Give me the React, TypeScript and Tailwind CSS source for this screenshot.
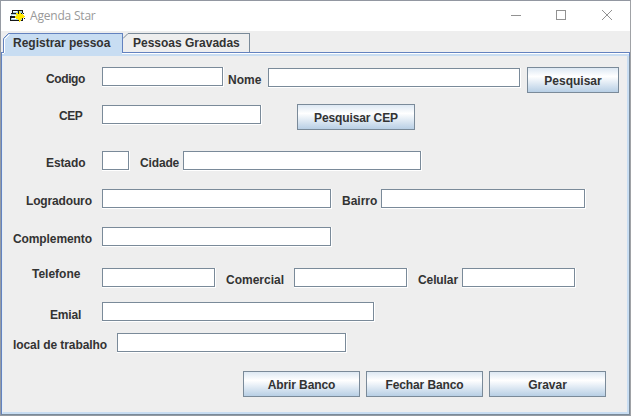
import type { ReactNode } from "react";

function Row({ className, children }: { className: string; children: ReactNode }) {
  return <div className={`flex shrink-0 items-start ${className}`}>{children}</div>;
}

function Label({ className, children }: { className: string; children: ReactNode }) {
  return <label className={`block shrink-0 whitespace-nowrap leading-4 ${className}`}>{children}</label>;
}

function Field({ className }: { className: string }) {
  return (
    <div className={`h-5 shrink-0 border-r border-b border-white ${className}`}>
      <input className="block h-[19px] w-full border border-[#7a8a99] bg-white px-1 outline-none" />
    </div>
  );
}

function Button({ className, children }: { className: string; children: ReactNode }) {
  return (
    <button
      className={`h-[26px] shrink-0 border border-[#7a8a99] bg-linear-to-b from-[#dde8f3] via-white via-35% to-[#b8cfe5] pt-px text-center leading-4 whitespace-nowrap ${className}`}
    >
      {children}
    </button>
  );
}

function AppIcon() {
  return (
    <svg width="16" height="14" viewBox="0 0 16 14" shapeRendering="crispEdges">
      <path d="M2 1h11v4H2zM1 5h11v3H1zM0 8h13v4H0z" fill="#a9d3dd" />
      <path d="M2 1h11v1H2zM2 1h1v3H2zM12 1h1v3h-1zM1 4h11v1H1zM0 7h9v2H0zM0 11h13v1H0zM0 9h1v2H0zM12 9h1v2h-1z" fill="#16181a" />
      <path d="M3 2h4v1H3zM2 6h4v1H2zM2 9h4v1H2z" fill="#ffffff" />
      <path
        d="M9 2h1v2h1v1h2v1h1v1h1v1h-1v1h-2v1h-1v2h-1v1H9v-2H8v-1H6V9H5V7h2V6H6V4h2v1h1z"
        fill="#ffe900"
      />
      <path d="M8 2h1v2H8zM13 4h1v1h-1zM14 9h1v1h-1zM11 11h1v1h-1zM8 11h1v1H8z" fill="#16181a" />
    </svg>
  );
}

export default function App() {
  return (
    <div className="flex h-[416px] w-[631px] flex-col overflow-hidden border border-t-[#9297a1] border-r-[#a0a2a6] border-b-[#939aa2] border-l-[#969ba3] bg-[#eeeeee] font-['Liberation_Sans',Arial,sans-serif] text-[12px] font-bold text-[#333333]">
      <header className="flex h-[30px] shrink-0 items-center bg-white pl-[9px]">
        <AppIcon />
        <span className="ml-1 font-['Open_Sans',sans-serif] text-[12px] font-normal tracking-[-0.2px] text-[#999999]">
          Agenda Star
        </span>
        <svg className="mr-[17px] ml-auto" width="102" height="12" fill="none" stroke="#929292" shapeRendering="crispEdges">
          <path d="M0 5.5h10M45.5.5h9v9h-9z" />
          <path d="m91 0 10 10m0-10L91 10" shapeRendering="auto" />
        </svg>
      </header>

      <nav className="flex h-[21px] shrink-0 items-start pt-[2px] pl-[2px]">
        <div className="relative h-[19px] w-[120px] border-t border-r border-[#6382bf] bg-[#c8ddf2] pl-[10px] leading-[19px]">
          <svg className="absolute -top-px left-0" width="7" height="20">
            <path d="M0 0h6L0 6z" fill="#eee" />
            <path d="M.5 20V5.5l5-5H7" fill="none" stroke="#6382bf" />
            <path d="M1.5 20V6.5l5-5" fill="none" stroke="#fff" />
          </svg>
          <span className="block">Registrar pessoa</span>
        </div>
        <div className="relative h-[19px] w-[127px] border-t border-r border-[#7a8a99] pl-[10px] leading-[19px]">
          <svg className="absolute -top-px left-0" width="7" height="7">
            <path d="M0 0h6L0 6z" fill="#eee" />
            <path d="M0 5.5 5 .5h2" fill="none" stroke="#7a8a99" />
          </svg>
          <span className="block">Pessoas Gravadas</span>
        </div>
      </nav>

      <div className="flex h-1 shrink-0">
        <div className="h-1 w-[3px] border-t border-l border-[#6382bf] bg-[#c8ddf2]">
          <div className="h-px bg-white" />
        </div>
        <div className="h-1 w-[118px] bg-[#c8ddf2]" />
        <div className="h-1 flex-1 border-t border-r border-[#6382bf] bg-[#c8ddf2]">
          <div className="h-px bg-white" />
        </div>
      </div>

      <main className="min-h-0 flex-1 border-x border-b border-r-[#7a8a99] border-b-[#7a8a99] border-l-[#6382bf]">
        <div className="flex h-full flex-col border-r-2 border-b-2 border-l border-r-[#c8ddf2] border-b-[#c8ddf2] border-l-[#e2eefa] pt-[11px]">
          <Row className="h-[38px]">
            <Label className="mt-1 ml-[43px] w-14 tracking-[-0.4px]">Codigo</Label>
            <Field className="w-[122px]" />
            <Label className="mt-[5px] ml-1 w-10">Nome</Label>
            <Field className="mt-px w-[253px]" />
            <Button className="ml-[6px] w-[92px]">Pesquisar</Button>
          </Row>
          <Row className="h-[46px]">
            <Label className="mt-[3px] ml-14 w-[43px] tracking-[-0.5px]">CEP</Label>
            <Field className="w-[160px]" />
            <Button className="-mt-px ml-[35px] w-[118px] tracking-[-0.12px]">Pesquisar CEP</Button>
          </Row>
          <Row className="h-[38px]">
            <Label className="mt-1 ml-[43px] w-14 tracking-[-0.1px]">Estado</Label>
            <Field className="w-7" />
            <Label className="mt-1 ml-[10px] w-[43px] tracking-[-0.15px]">Cidade</Label>
            <Field className="w-[239px]" />
          </Row>
          <Row className="h-[38px]">
            <Label className="mt-1 ml-[23px] w-[76px] tracking-[-0.15px]">Logradouro</Label>
            <Field className="w-[230px]" />
            <Label className="mt-1 ml-[10px] w-[39px]">Bairro</Label>
            <Field className="w-[205px]" />
          </Row>
          <Row className="h-[41px]">
            <Label className="mt-1 ml-[10px] w-[89px] tracking-[-0.1px]">Complemento</Label>
            <Field className="w-[230px]" />
          </Row>
          <Row className="h-[34px]">
            <Label className="-mt-[2px] ml-[29px] w-[70px]">Telefone</Label>
            <Field className="w-[114px]" />
            <Label className="mt-1 ml-[10px] w-[68px]">Comercial</Label>
            <Field className="w-[114px]" />
            <Label className="mt-1 ml-[10px] w-11 tracking-[-0.1px]">Celular</Label>
            <Field className="w-[114px]" />
          </Row>
          <Row className="h-[31px]">
            <Label className="mt-[5px] ml-[47px] w-[52px] tracking-[-0.15px]">Emial</Label>
            <Field className="w-[273px]" />
          </Row>
          <Row className="h-[38px]">
            <Label className="mt-1 ml-[10px] w-[104px] tracking-[-0.08px]">local de trabalho</Label>
            <Field className="w-[230px]" />
          </Row>
          <Row className="gap-[6px] pl-[240px]">
            <Button className="w-[117px] tracking-[-0.1px]">Abrir Banco</Button>
            <Button className="w-[117px] tracking-[-0.12px]">Fechar Banco</Button>
            <Button className="w-[117px]">Gravar</Button>
          </Row>
        </div>
      </main>
    </div>
  );
}
